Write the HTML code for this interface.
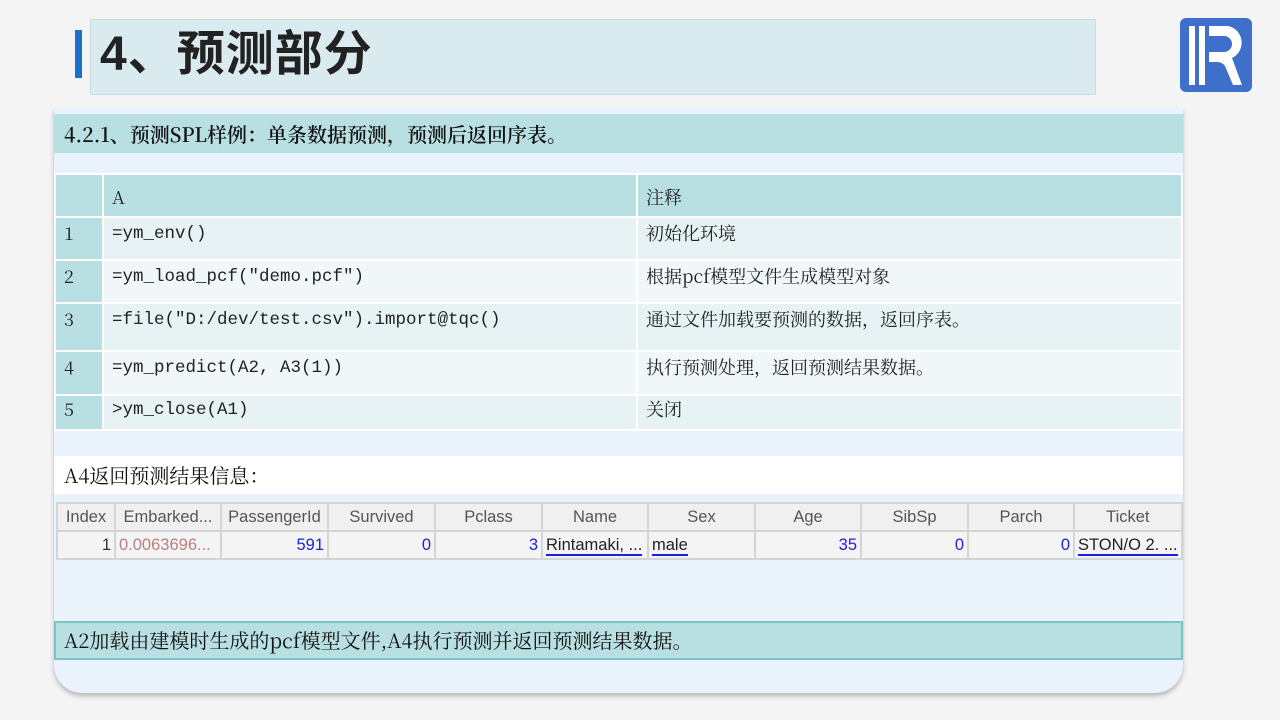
<!DOCTYPE html>
<html><head><meta charset="utf-8"><style>
*{margin:0;padding:0;box-sizing:border-box}
body{width:1280px;height:720px;background:#f4f4f4;position:relative;overflow:hidden;font-family:"Noto Serif CJK SC","Liberation Serif",serif}
.abs{position:absolute}
.tbox{left:90px;top:19px;width:1006px;height:76px;background:#daebef;border:1px solid #c8dde2}
.bar{left:75px;top:30px;width:7px;height:48px;background:#1a72c8}
.title{left:100px;top:22px;font:bold 48px "Liberation Sans","Noto Sans CJK SC",sans-serif;color:#222;line-height:66px;letter-spacing:1px}
.card{left:54px;top:108px;width:1129px;height:585px;background:#eaf2fc;border-radius:0 0 28px 28px;box-shadow:0 3px 5px rgba(0,0,0,.25)}
.hd{left:54px;top:114px;width:1129px;height:39px;background:#b8dfe2;font-size:20px;line-height:39px;padding-left:10px;color:#111;font-weight:600}
table.spl{position:absolute;left:54px;top:173px;width:1129px;border-collapse:collapse}
table.spl td{border:2px solid #fff;font-size:18px;line-height:22px;color:#222;vertical-align:top;padding:4px 0 0 8px}
table.spl td.c{font-family:"Liberation Mono",monospace;font-size:17.5px;padding-top:5px}
.n{background:#b8dfe2;color:#335;width:48px}
.o td{background:#e6f2f3}.e td{background:#f1f7f9}
.o td.n,.e td.n{background:#b8dfe2}
.h td{background:#b8dfe2;padding-top:11px!important;color:#234}
.a4{left:54px;top:456px;width:1129px;height:38px;background:#fff;font-size:20px;line-height:38px;padding-left:10px;color:#111}
table.g{position:absolute;left:56px;top:502px;border-collapse:collapse;font-family:"Liberation Sans",sans-serif;font-size:16.5px}
table.g td{border:2px solid #d4d4d4;height:28px;padding:0 3px;white-space:nowrap;overflow:hidden}
table.g tr.gh td{background:#f0f0f0;color:#555;text-align:center}
table.g tr.gr td{background:#f4f4f4;color:#2020e0;text-align:right}
.u{text-align:left!important;color:#222!important}
.u span{border-bottom:2px solid #2020e0}
.ft{left:54px;top:621px;width:1129px;height:39px;background:#b8dfe2;border:2px solid #7cc3c8;font-size:20px;line-height:34px;padding-left:8px;color:#111}
</style></head><body>
<div class="abs tbox"></div>
<div class="abs bar"></div>
<div class="abs title">4、预测部分</div>
<svg class="abs" style="left:1180px;top:18px" width="72" height="74" viewBox="0 0 72 74">
<rect x="0" y="0" width="72" height="74" rx="6" fill="#3d6fcb"/>
<rect x="9" y="8" width="6" height="59" fill="#fff"/>
<rect x="19" y="8" width="6" height="59" fill="#fff"/>
<path d="M29 8 H48 A17 17 0 0 1 52 40 L62 67 H53 L45 48 A10 10 0 0 0 37 44 H29 V34 H44 A8 8 0 0 0 44 18 H29 Z" fill="#fff"/>
</svg>
<div class="abs card"></div>
<div class="abs hd">4.2.1、预测SPL样例：单条数据预测，预测后返回序表。</div>
<table class="spl">
<tr class="h" style="height:43px"><td class="n"></td><td style="width:534px">A</td><td>注释</td></tr>
<tr class="o" style="height:43px"><td class="n">1</td><td class="c">=ym_env()</td><td>初始化环境</td></tr>
<tr class="e" style="height:43px"><td class="n">2</td><td class="c">=ym_load_pcf("demo.pcf")</td><td>根据pcf模型文件生成模型对象</td></tr>
<tr class="o" style="height:48px"><td class="n">3</td><td class="c">=file("D:/dev/test.csv").import@tqc()</td><td>通过文件加载要预测的数据，返回序表。</td></tr>
<tr class="e" style="height:44px"><td class="n">4</td><td class="c">=ym_predict(A2, A3(1))</td><td>执行预测处理，返回预测结果数据。</td></tr>
<tr class="o" style="height:35px"><td class="n" style="padding-top:2px">5</td><td class="c" style="padding-top:3px">&gt;ym_close(A1)</td><td style="padding-top:2px">关闭</td></tr>
</table>
<div class="abs a4">A4返回预测结果信息：</div>
<table class="g">
<tr class="gh"><td style="width:58px">Index</td><td style="width:106px">Embarked...</td><td style="width:107px">PassengerId</td><td style="width:107px">Survived</td><td style="width:107px">Pclass</td><td style="width:106px">Name</td><td style="width:107px">Sex</td><td style="width:106px">Age</td><td style="width:107px">SibSp</td><td style="width:106px">Parch</td><td style="width:107px">Ticket</td></tr>
<tr class="gr"><td style="color:#333">1</td><td style="color:#b88080;text-align:left">0.0063696...</td><td>591</td><td>0</td><td>3</td><td class="u"><span>Rintamaki, ...</span></td><td class="u"><span>male</span></td><td>35</td><td>0</td><td>0</td><td class="u"><span>STON/O 2. ...</span></td></tr>
</table>
<div class="abs ft">A2加载由建模时生成的pcf模型文件,A4执行预测并返回预测结果数据。</div>
</body></html>
